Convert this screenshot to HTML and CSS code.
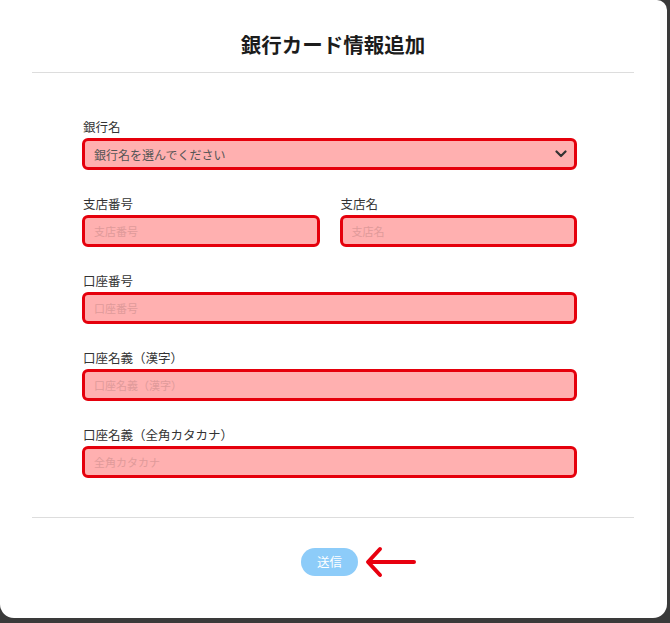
FILE: index.html
```html
<!DOCTYPE html>
<html lang="ja">
<head>
    <meta charset="utf-8">
    <title>銀行カード情報追加</title>
    <link rel="stylesheet" href="styles.css">
</head>
<body>
    <div class="modal">
        <div class="modal-header">
            <h2 class="modal-title">銀行カード情報追加</h2>
        </div>

        <form class="bank-form" id="bankForm">
            <div class="form-group">
                <label for="bankName">銀行名</label>
                <div class="select-wrap">
                    <select id="bankName" class="field">
                        <option value="">銀行名を選んでください</option>
                    </select>
                    <svg class="chevron" width="12" height="8" viewBox="0 0 12 8">
                        <path d="M1.5 1.5 L6 6 L10.5 1.5" fill="none" stroke="#333" stroke-width="2.2" stroke-linecap="round" stroke-linejoin="round"/>
                    </svg>
                </div>
            </div>

            <div class="form-row">
                <div class="form-group">
                    <label for="branchNo">支店番号</label>
                    <input type="text" id="branchNo" class="field" placeholder="支店番号">
                </div>
                <div class="form-group">
                    <label for="branchName">支店名</label>
                    <input type="text" id="branchName" class="field" placeholder="支店名">
                </div>
            </div>

            <div class="form-group">
                <label for="accountNo">口座番号</label>
                <input type="text" id="accountNo" class="field" placeholder="口座番号">
            </div>

            <div class="form-group">
                <label for="holderKanji">口座名義（漢字）</label>
                <input type="text" id="holderKanji" class="field" placeholder="口座名義（漢字）">
            </div>

            <div class="form-group">
                <label for="holderKana">口座名義（全角カタカナ）</label>
                <input type="text" id="holderKana" class="field" placeholder="全角カタカナ">
            </div>
        </form>

        <div class="modal-footer">
            <div class="submit-wrap">
                <button type="submit" form="bankForm" class="btn-submit">送信</button>
                <svg class="pointer" width="52" height="32" viewBox="0 0 52 32">
                    <path d="M49 16 H4 M15 3 L3 16 L15 29" fill="none" stroke="#e8000f" stroke-width="4" stroke-linecap="round" stroke-linejoin="round"/>
                </svg>
            </div>
        </div>
    </div>
</body>
</html>
```

FILE: styles.css
```css
html, body {
    margin: 0;
    padding: 0;
}
body {
    background: #3a3a3a;
    font-family: "Noto Sans CJK JP", "Noto Sans", sans-serif;
    color: #222;
    width: 670px;
    height: 623px;
    overflow: hidden;
}
.modal {
    width: 667px;
    height: 618px;
    background: #fff;
    border-radius: 0 10px 14px 14px;
}
.modal-header {
    margin: 0 33px 0 32px;
    height: 72px;
    border-bottom: 1px solid #ddd;
    display: flex;
    align-items: center;
    justify-content: center;
}
.modal-title {
    margin: 16px 0 0 0;
    font-size: 20.5px;
    font-weight: 700;
    line-height: 24px;
    color: #1c1c1c;
}
.bank-form {
    width: 495px;
    padding: 45px 0 39px 82px;
}
.form-group {
    margin-bottom: 25px;
}
.form-group:last-child {
    margin-bottom: 0;
}
.form-row {
    display: flex;
    gap: 20px;
}
.form-row .form-group {
    flex: 1;
}
label {
    display: block;
    font-size: 12.5px;
    line-height: 18px;
    margin-bottom: 2px;
    padding-left: 1px;
    color: #333;
}
.field {
    display: block;
    box-sizing: border-box;
    width: 100%;
    height: 32px;
    border: 3px solid #e5000c;
    border-radius: 6px;
    background: #ffb0b0;
    padding: 0 9px;
    font-family: inherit;
    font-size: 11px;
    color: #555;
    outline: none;
}
.field::placeholder {
    color: #e09a9a;
}
select.field {
    appearance: none;
    -webkit-appearance: none;
    font-size: 12px;
    color: #555;
}
.select-wrap {
    position: relative;
}
.chevron {
    position: absolute;
    right: 10px;
    top: 12px;
}
.modal-footer {
    margin: 0 33px 0 32px;
    border-top: 1px solid #ddd;
    padding-top: 30px;
    display: flex;
    justify-content: center;
}
.submit-wrap {
    position: relative;
    margin-right: 7px;
}
.btn-submit {
    height: 28px;
    padding: 0 16px;
    border: none;
    border-radius: 14px;
    background: #8dccf9;
    color: #fff;
    font-family: inherit;
    font-size: 12.5px;
    line-height: 28px;
}
.pointer {
    position: absolute;
    left: 64px;
    top: -2px;
}
```
